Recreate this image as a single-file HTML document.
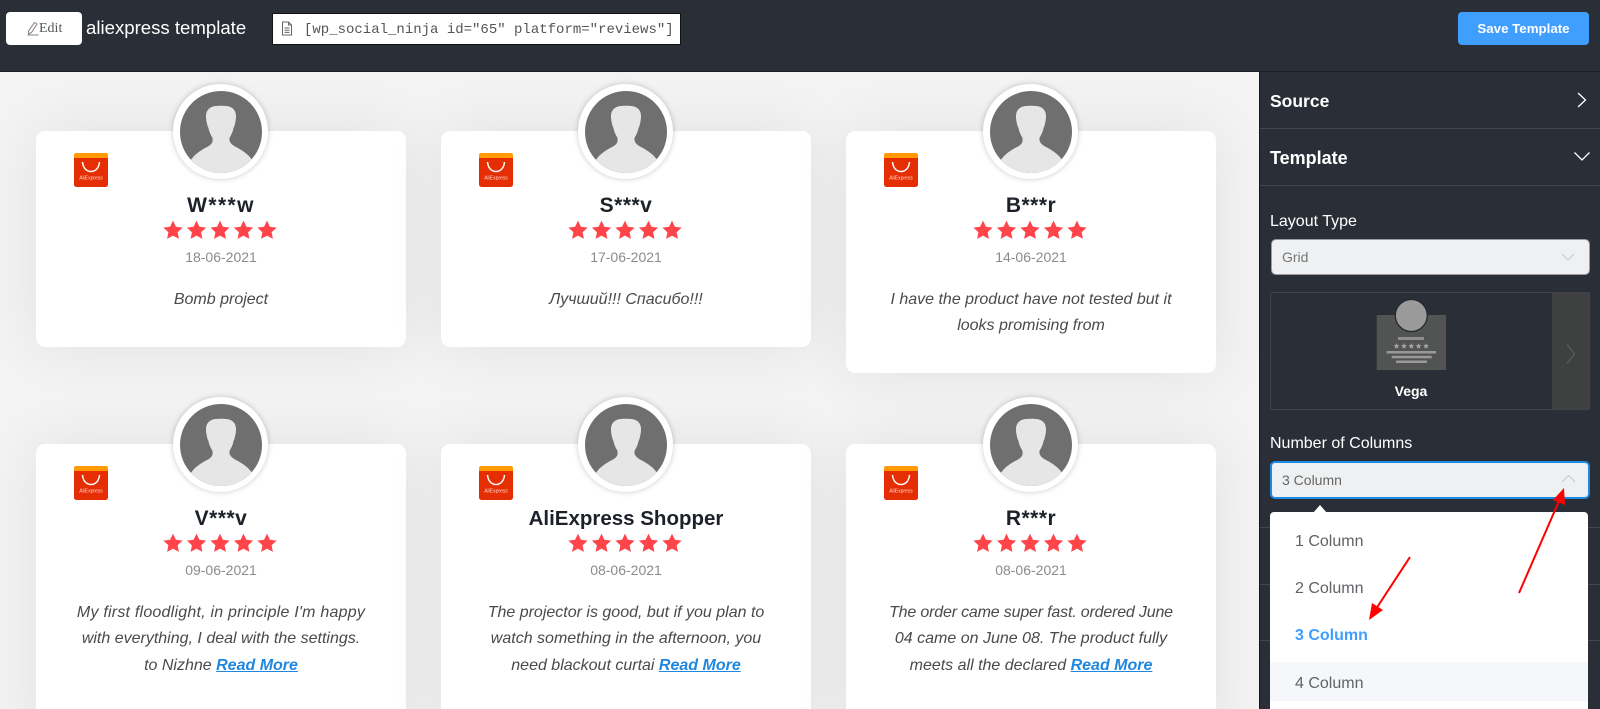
<!DOCTYPE html>
<html><head><meta charset="utf-8"><style>
*{box-sizing:border-box}
html,body{margin:0;padding:0;width:1600px;height:709px;overflow:hidden;background:#f3f3f3;font-family:"Liberation Sans",sans-serif}
.abs,.a{position:absolute;white-space:nowrap}
.hdr{position:absolute;left:0;top:0;width:1600px;height:72px;background:#2a2e37;border-bottom:1px solid #1c1f25}
.side{position:absolute;left:1259px;top:72px;width:341px;height:637px;background:#2a2e37;border-left:1px solid #16181d}
.main{position:absolute;left:0;top:72px;width:1259px;height:637px;overflow:hidden;background:#f3f3f3}
.card{position:absolute;width:370px;background:#fff;border-radius:9px;box-shadow:0 0 60px rgba(0,0,0,.075)}
.av{position:absolute;left:137px;top:-47px;width:95px;height:95px;border-radius:50%;background:#fff;box-shadow:0 0 6px rgba(0,0,0,.22)}
.av svg{position:absolute;left:6.5px;top:6.5px;border-radius:50%}
.logo{position:absolute;left:38px;top:22px}
.name{position:absolute;left:0;width:370px;top:61px;text-align:center;font-size:21px;line-height:28px;font-weight:bold;color:#1d2129;letter-spacing:.5px}
.stars{position:absolute;left:126px;top:88px}
.date{position:absolute;left:0;width:370px;top:116px;text-align:center;font-size:14px;line-height:20px;color:#8b8b8b}
.txt{position:absolute;left:0;width:370px;top:156px;text-align:center;font-size:16px;line-height:26.3px;font-style:italic;color:#4a4a4a;white-space:nowrap}
.txt a{color:#1f87e0;font-weight:bold;text-decoration:underline}
.dv{position:absolute;height:1px;background:#41454d}
</style></head><body>
<svg width="0" height="0" style="position:absolute"><defs>
<symbol id="st" viewBox="0 0 20 20"><path d="M10 .6l2.9 6.2 6.7.8-5 4.6 1.3 6.7L10 15.6l-5.9 3.3 1.3-6.7-5-4.6 6.7-.8z" fill="#ff444a"/></symbol>
<symbol id="sg" viewBox="0 0 20 20"><path d="M10 .6l2.9 6.2 6.7.8-5 4.6 1.3 6.7L10 15.6l-5.9 3.3 1.3-6.7-5-4.6 6.700-.8z" fill="#a2a2a2"/></symbol>
<symbol id="pp" viewBox="0 0 82 82"><rect width="82" height="82" fill="#6f6f6f"/><path d="M33 15.500C36 14.500 46 14.500 49 15.500C53 16.500 56 20 56 25C56 30 55 32 54.500 35L53.500 37C53 41 51 44 49.500 47C49 51 51 53 55 55.500C60 58 67 62 71 67.500L82 82H0L12 67.500C16 62 23 58 28 55.500C32 53 33 51 32.500 47C31 44 29 41 28.500 37L27.500 35C27 32 26 30 26 25C26 20 29 16.500 33 15.500Z" fill="#e6e6e6"/></symbol>
<symbol id="lg" viewBox="0 0 34 34"><rect width="34" height="34" rx="2.500" fill="#e62e04"/><path d="M0 5V2.500A2.500 2.500 0 0 1 2.500 0h29A2.500 2.500 0 0 1 34 2.500V5z" fill="#ff9a00"/><path d="M8.500 9c.5 6 4 9.500 8.500 9.500s8-3.500 8.500-9.500" fill="none" stroke="#fff" stroke-width="1.500"/><text x="17" y="26.500" text-anchor="middle" font-size="5" fill="#fbd5c8" font-family="Liberation Sans">AliExpress</text></symbol>
</defs></svg>

<div class="main">
<div class="card" style="left:36px;top:59px;height:216px"><div class="av"><svg width="82" height="82"><use href="#pp"/></svg></div><svg class="logo" width="34" height="34"><use href="#lg"/></svg><div class="name" style="letter-spacing:1.4px">W***w</div><svg class="stars" width="116" height="22"><use href="#st" x="1" y="1" width="20" height="20"/><use href="#st" x="24.500" y="1" width="20" height="20"/><use href="#st" x="48" y="1" width="20" height="20"/><use href="#st" x="71.500" y="1" width="20" height="20"/><use href="#st" x="95" y="1" width="20" height="20"/></svg><div class="date">18-06-2021</div><div class="txt">Bomb project</div></div>

<div class="card" style="left:441px;top:59px;height:216px"><div class="av"><svg width="82" height="82"><use href="#pp"/></svg></div><svg class="logo" width="34" height="34"><use href="#lg"/></svg><div class="name">S***v</div><svg class="stars" width="116" height="22"><use href="#st" x="1" y="1" width="20" height="20"/><use href="#st" x="24.500" y="1" width="20" height="20"/><use href="#st" x="48" y="1" width="20" height="20"/><use href="#st" x="71.500" y="1" width="20" height="20"/><use href="#st" x="95" y="1" width="20" height="20"/></svg><div class="date">17-06-2021</div><div class="txt">Лучший!!! Спасибо!!!</div></div>

<div class="card" style="left:846px;top:59px;height:242px"><div class="av"><svg width="82" height="82"><use href="#pp"/></svg></div><svg class="logo" width="34" height="34"><use href="#lg"/></svg><div class="name">B***r</div><svg class="stars" width="116" height="22"><use href="#st" x="1" y="1" width="20" height="20"/><use href="#st" x="24.500" y="1" width="20" height="20"/><use href="#st" x="48" y="1" width="20" height="20"/><use href="#st" x="71.500" y="1" width="20" height="20"/><use href="#st" x="95" y="1" width="20" height="20"/></svg><div class="date">14-06-2021</div><div class="txt">I have the product have not tested but it<br>looks promising from</div></div>

<div class="card" style="left:36px;top:372px;height:300px"><div class="av"><svg width="82" height="82"><use href="#pp"/></svg></div><svg class="logo" width="34" height="34"><use href="#lg"/></svg><div class="name">V***v</div><svg class="stars" width="116" height="22"><use href="#st" x="1" y="1" width="20" height="20"/><use href="#st" x="24.500" y="1" width="20" height="20"/><use href="#st" x="48" y="1" width="20" height="20"/><use href="#st" x="71.500" y="1" width="20" height="20"/><use href="#st" x="95" y="1" width="20" height="20"/></svg><div class="date">09-06-2021</div><div class="txt"><span style="letter-spacing:.22px">My first floodlight, in principle I'm happy</span><br>with everything, I deal with the settings.<br>to Nizhne <a>Read More</a></div></div>

<div class="card" style="left:441px;top:372px;height:300px"><div class="av"><svg width="82" height="82"><use href="#pp"/></svg></div><svg class="logo" width="34" height="34"><use href="#lg"/></svg><div class="name" style="font-size:20.500px;letter-spacing:0">AliExpress Shopper</div><svg class="stars" width="116" height="22"><use href="#st" x="1" y="1" width="20" height="20"/><use href="#st" x="24.500" y="1" width="20" height="20"/><use href="#st" x="48" y="1" width="20" height="20"/><use href="#st" x="71.500" y="1" width="20" height="20"/><use href="#st" x="95" y="1" width="20" height="20"/></svg><div class="date">08-06-2021</div><div class="txt">The projector is good, but if you plan to<br>watch something in the afternoon, you<br>need blackout curtai <a>Read More</a></div></div>

<div class="card" style="left:846px;top:372px;height:300px"><div class="av"><svg width="82" height="82"><use href="#pp"/></svg></div><svg class="logo" width="34" height="34"><use href="#lg"/></svg><div class="name">R***r</div><svg class="stars" width="116" height="22"><use href="#st" x="1" y="1" width="20" height="20"/><use href="#st" x="24.500" y="1" width="20" height="20"/><use href="#st" x="48" y="1" width="20" height="20"/><use href="#st" x="71.500" y="1" width="20" height="20"/><use href="#st" x="95" y="1" width="20" height="20"/></svg><div class="date">08-06-2021</div><div class="txt"><span style="letter-spacing:-.18px">The order came super fast. ordered June</span><br>04 came on June 08. The product fully<br>meets all the declared <a>Read More</a></div></div>
</div>

<div class="hdr"></div>
<div class="a" style="left:6px;top:12px;width:76px;height:33px;background:#fff;border-radius:4px"></div>
<svg class="a" style="left:26px;top:21px" width="14" height="15" viewBox="0 0 14 15"><path d="M8.500 1.500l2.500 1.500-5.500 8.500-3 1.500.2-3.300zM1.500 14h11" fill="none" stroke="#8a7d78" stroke-width="1"/></svg>
<div class="a" style="left:39px;top:20px;font:14px/18px 'Liberation Serif',serif;color:#555">Edit</div>
<div class="a" style="left:86px;top:16px;font-size:18.600px;line-height:24px;color:#fff">aliexpress template</div>
<div class="a" style="left:272px;top:13px;width:409px;height:32px;background:#fff;border:1px solid #111"></div>
<svg class="a" style="left:281px;top:21px" width="12" height="15" viewBox="0 0 12 15"><path d="M1.500 1h6l3 3v10h-9zM7.500 1v3h3M3.500 7h5M3.500 9.200h5M3.500 11.400h5" fill="none" stroke="#666" stroke-width="1"/></svg>
<div class="a" style="left:304px;top:21px;font:14px/18px 'Liberation Mono',monospace;color:#555">[wp_social_ninja id="65" platform="reviews"]</div>
<div class="a" style="left:1458px;top:12px;width:131px;height:33px;background:#409eff;border-radius:4px;color:#fff;font-size:13.300px;font-weight:bold;line-height:33px;text-align:center">Save Template</div>

<div class="side"></div>
<div class="a" style="left:1270px;top:89px;font-size:17.500px;line-height:24px;font-weight:bold;color:#fff">Source</div>
<svg class="a" style="left:1575px;top:91px" width="14" height="18" viewBox="0 0 14 18"><path d="M3 2l7.500 7L3 16" fill="none" stroke="#fff" stroke-width="1.300"/></svg>
<div class="dv" style="left:1260px;top:128px;width:340px"></div>
<div class="a" style="left:1270px;top:146px;font-size:18px;line-height:24px;font-weight:bold;color:#fff">Template</div>
<svg class="a" style="left:1573px;top:150px" width="18" height="13" viewBox="0 0 18 13"><path d="M1.500 2.500L9 10l7.500-7.500" fill="none" stroke="#fff" stroke-width="1.300"/></svg>
<div class="dv" style="left:1260px;top:185px;width:340px"></div>

<div class="a" style="left:1270px;top:211px;font-size:16px;line-height:22px;color:#fff">Layout Type</div>
<div class="a" style="left:1271px;top:239px;width:319px;height:36px;background:#eff0f1;border:1px solid #9a9ca0;border-radius:5px;padding-left:10px;font-size:14px;line-height:34px;color:#777">Grid</div>
<svg class="a" style="left:1561px;top:252px" width="14" height="10" viewBox="0 0 14 10"><path d="M1 2l6 6 6-6" fill="none" stroke="#c6c9d0" stroke-width="1"/></svg>

<div class="a" style="left:1270px;top:292px;width:320px;height:118px;border:1px solid #3f434b;border-radius:2px"></div>
<div class="a" style="left:1552px;top:293px;width:37px;height:116px;background:#3f4140"></div>
<svg class="a" style="left:1565px;top:342px" width="12" height="24" viewBox="0 0 12 24"><path d="M2 2.500l7.500 9.500L2 21.500" fill="none" stroke="#5b5d5d" stroke-width="1.200"/></svg>
<svg class="a" style="left:1376px;top:297px" width="70" height="75" viewBox="0 0 70 75">
<rect x="0.700" y="18" width="69.300" height="55" fill="#525454"/>
<circle cx="35.300" cy="18.500" r="16" fill="#9a9a9a" stroke="#24272d" stroke-width="1.300"/>
<rect x="22" y="40" width="26" height="3" fill="#8f8f8f"/>
<use href="#sg" x="17.500" y="46" width="6" height="6"/><use href="#sg" x="25" y="46" width="6" height="6"/><use href="#sg" x="32.300" y="46" width="6" height="6"/><use href="#sg" x="39.600" y="46" width="6" height="6"/><use href="#sg" x="47" y="46" width="6" height="6"/>
<rect x="10.700" y="54" width="49.300" height="2.500" fill="#999"/><rect x="15.700" y="58.800" width="40" height="2.500" fill="#999"/><rect x="20" y="63.500" width="31" height="2.500" fill="#999"/>
</svg>
<div class="a" style="left:1381px;top:381px;width:60px;text-align:center;font-size:14px;line-height:20px;font-weight:bold;color:#fff">Vega</div>

<div class="a" style="left:1270px;top:433px;font-size:16px;line-height:22px;color:#fff">Number of Columns</div>
<div class="a" style="left:1270px;top:461px;width:320px;height:38px;background:#eff0f1;border:2px solid #1e88e5;border-radius:5px;padding-left:10px;font-size:14px;line-height:34px;color:#666">3 Column</div>
<svg class="a" style="left:1561px;top:474px" width="15" height="10" viewBox="0 0 15 10"><path d="M1 8l6.500-6.500L14 8" fill="none" stroke="#c6c9d0" stroke-width="1"/></svg>

<div class="dv" style="left:1260px;top:527px;width:340px"></div>
<div class="dv" style="left:1260px;top:584px;width:340px"></div>
<div class="dv" style="left:1260px;top:640px;width:340px"></div>

<div class="a" style="left:1270px;top:512px;width:318px;height:197px;background:#fff;border-radius:4px 4px 0 0"></div>
<svg class="a" style="left:1313px;top:505px" width="14" height="8" viewBox="0 0 14 8"><path d="M0 8L7 0l7 8z" fill="#fff"/></svg>
<div class="a" style="left:1270px;top:662px;width:318px;height:39px;background:#f5f7fa"></div>
<div class="a" style="left:1295px;top:531px;font-size:16px;line-height:22px;color:#606266">1 Column</div>
<div class="a" style="left:1295px;top:578px;font-size:16px;line-height:22px;color:#606266">2 Column</div>
<div class="a" style="left:1295px;top:625px;font-size:16px;line-height:22px;font-weight:bold;color:#409eff">3 Column</div>
<div class="a" style="left:1295px;top:673px;font-size:16px;line-height:22px;color:#606266">4 Column</div>

<svg class="a" style="left:1340px;top:480px" width="240" height="150" viewBox="1340 480 240 150">
<path d="M1519 593L1559 501" fill="none" stroke="#f00" stroke-width="2"/>
<path d="M1564 488L1565 505 1553 500z" fill="#f00"/>
<path d="M1410 557L1376 609" fill="none" stroke="#f00" stroke-width="2"/>
<path d="M1369 620L1372 603 1383 610z" fill="#f00"/>
</svg>
</body></html>
